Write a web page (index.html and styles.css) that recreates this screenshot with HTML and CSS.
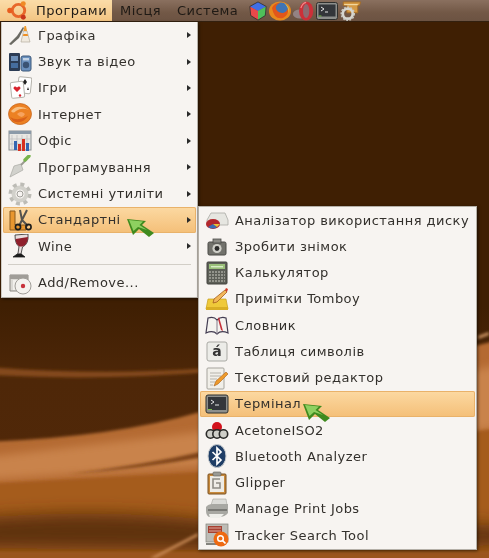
FILE: index.html
```html
<!DOCTYPE html>
<html>
    <head>
        <title>Програми</title>
        <link rel="stylesheet" href="styles.css">
    </head>
    <body>
        <div class="desktop">
            <svg class="wallpaper" viewBox="0 0 489 558" preserveAspectRatio="none">
                <defs>
                    <filter id="soft" filterUnits="userSpaceOnUse" x="-50" y="250" width="600" height="360"><feGaussianBlur stdDeviation="4"/></filter>
                    <filter id="softer" filterUnits="userSpaceOnUse" x="-50" y="250" width="600" height="360"><feGaussianBlur stdDeviation="8"/></filter>
                    <filter id="thin" filterUnits="userSpaceOnUse" x="-50" y="250" width="600" height="360"><feGaussianBlur stdDeviation="1.6"/></filter>
                    <linearGradient id="dusk" x1="0" y1="0" x2="0" y2="1">
                        <stop offset="0.55" stop-color="#3f1f03"/>
                        <stop offset="0.68" stop-color="#4e2708"/>
                        <stop offset="1" stop-color="#54290a"/>
                    </linearGradient>
                </defs>
                <rect width="489" height="558" fill="url(#dusk)"/>
                <path d="M-10 367 Q100 376 210 368 L210 372 Q100 381 -10 375Z" fill="#84491a" filter="url(#thin)"/>
                <path d="M-20 442 Q110 438 200 412 L520 335 L520 600 L-20 600Z" fill="#b46a30" filter="url(#thin)"/>
                <path d="M-20 458 L200 432 L520 360 L520 425 L200 466 L-20 480Z" fill="#c9834b" filter="url(#soft)"/>
                <path d="M-20 484 L200 472 L520 425 L520 600 L-20 600Z" fill="#a55b1d" filter="url(#thin)"/>
                <path d="M68 474 Q140 466 210 450 L210 456 Q140 469 68 474Z" fill="#7e4319" filter="url(#thin)"/>
                <path d="M-20 518 Q100 508 210 520 L520 526 L520 545 L210 550 L-20 548Z" fill="#5f330e" filter="url(#softer)"/>
                <rect x="-20" y="552" width="540" height="20" fill="#9a551b" filter="url(#thin)"/>
                <path d="M150 558 L198 533 L198 536 L156 558Z" fill="#c98a55" filter="url(#thin)"/>
                <path d="M489 332 L478 336 L478 339 L489 335Z" fill="#d39a68" filter="url(#thin)"/>
            </svg>

            <div class="panel">
                <div class="panel-item panel-active">
                    <svg class="logo" viewBox="0 0 24 20" preserveAspectRatio="none">
                        <circle cx="12" cy="10" r="6.5" fill="none" stroke="#e8672a" stroke-width="3"/>
                        <circle cx="3" cy="10" r="2.8" fill="#e85d1e"/>
                        <circle cx="17" cy="2.8" r="2.6" fill="#f08a25"/>
                        <circle cx="17" cy="17.2" r="2.6" fill="#c8351b"/>
                    </svg>
                    <span>Програми</span>
                </div>
                <div class="panel-item"><span>Місця</span></div>
                <div class="panel-item"><span>Система</span></div>
                <div class="launchers">
                    <svg class="launcher cube" viewBox="0 0 22 22">
                        <path d="M11 1 L20 6 L11 11 L2 6Z" fill="#3f6fe8"/>
                        <path d="M2 6 L11 11 L11 21 L3 16Z" fill="#e8494a"/>
                        <path d="M20 6 L11 11 L11 21 L19 16Z" fill="#4fc05a"/>
                        <path d="M11 1 L20 6 L19 16 L11 21 L3 16 L2 6Z" fill="none" stroke="#2a2a2a" stroke-width=".8"/>
                    </svg>
                    <svg class="launcher" viewBox="0 0 22 20">
                        <ellipse cx="11" cy="10" rx="11" ry="9.5" fill="#e8891c"/>
                        <ellipse cx="12" cy="8" rx="7.5" ry="6.5" fill="#3f74b5"/>
                        <path d="M3 7 Q5 2 11 2 Q6 4 7 8 Q9 12 14 12 Q18 11 19 7 Q20 14 14 17 Q5 19 3 7Z" fill="#e2561a"/>
                        <path d="M15 2 Q21 5 20 12 Q19 5 15 2Z" fill="#f6c83a"/>
                    </svg>
                    <svg class="launcher wide" viewBox="0 0 26 20" preserveAspectRatio="none">
                        <ellipse cx="9" cy="13" rx="8" ry="4.5" fill="#9c8d92" opacity=".8"/>
                        <ellipse cx="16" cy="10" rx="8" ry="9.5" fill="#cc2f38"/>
                        <ellipse cx="16" cy="10" rx="3.6" ry="7" fill="#8d6a70"/>
                        <path d="M10 7 Q12 2 16 1.4" fill="none" stroke="#f08a8a" stroke-width="1.4"/>
                    </svg>
                    <svg class="launcher" viewBox="0 0 22 18">
                        <rect x=".5" y=".5" width="21" height="17" rx="2" fill="#8d8f8c" stroke="#2f302e"/>
                        <rect x="2.5" y="2.5" width="17" height="12" fill="#33363a"/>
                        <path d="M5 5 L8 7 L5 9 M9 10 H12" fill="none" stroke="#e6e6e6" stroke-width="1"/>
                        <rect x="2.5" y="13.5" width="3" height="1" fill="#7dc04a"/>
                    </svg>
                    <svg class="launcher wide" viewBox="0 0 24 22">
                        <path d="M4 1 H23 L22 5 H20 V13 H8 V5 H4Z" fill="#d59a45" stroke="#a66c22" stroke-width="1"/>
                        <path d="M5 4 H20" stroke="#f5dda8" stroke-width="1.2"/>
                        <circle cx="9" cy="14" r="5.5" fill="none" stroke="#d6d6cf" stroke-width="3"/>
                        <circle cx="9" cy="14" r="7.2" fill="none" stroke="#c9c9c2" stroke-width="1.6" stroke-dasharray="2 1.6"/>
                    </svg>
                </div>
            </div>

            <div class="menu main-menu">
                <div class="menu-item">
                    <svg class="icon" viewBox="0 0 24 24">
                        <path d="M13 19 L15.5 8 H19 L22 19Z" fill="#f0eadf" stroke="#b5ad9f" stroke-width=".7"/>
                        <path d="M15 13 H20 L19.6 11 H15.4Z" fill="#ee8f24"/>
                        <path d="M15.5 8 L19 8 L18 3 H16.5Z" fill="#f09c2d"/>
                        <path d="M1 21 L9 13 L15 4 L16 5 L11 15 L3 22Z" fill="#6b6a63"/>
                    </svg>
                    <span class="label">Графіка</span><i class="arrow"></i>
                </div>
                <div class="menu-item">
                    <svg class="icon" viewBox="0 0 24 24">
                        <rect x="1" y="3" width="11" height="18" rx="1" fill="#2c3c54"/>
                        <rect x="3" y="6" width="7" height="5" fill="#6d8fb8"/>
                        <rect x="3" y="13" width="7" height="5" fill="#456d9e"/>
                        <rect x="13" y="6" width="10" height="15" rx="2" fill="#6a90bd" stroke="#3d587a"/>
                        <circle cx="18" cy="15" r="3.2" fill="#3a5374"/>
                        <rect x="15" y="8" width="6" height="2.4" fill="#c2d2e4"/>
                    </svg>
                    <span class="label">Звук та відео</span><i class="arrow"></i>
                </div>
                <div class="menu-item">
                    <svg class="icon" viewBox="0 0 24 24">
                        <rect x="10" y="1" width="13" height="16" rx="1.5" fill="#fff" stroke="#b5b2ab" transform="rotate(6 15 10)"/>
                        <rect x="3" y="6" width="13" height="16" rx="1.5" fill="#fff" stroke="#b5b2ab" transform="rotate(-6 8 14)"/>
                        <path d="M9 16 L5.5 12.5 Q5.5 10 7.5 10.5 L9 11.5 L10.5 10.5 Q12.5 10 12.5 12.5Z" fill="#d9232d"/>
                        <path d="M17 3 L19 6 L17 9 L15 6Z M20 11 L21 14 L19 14Z" fill="#222"/>
                        <circle cx="12" cy="19.5" r="1.2" fill="#d9232d"/>
                    </svg>
                    <span class="label">Ігри</span><i class="arrow"></i>
                </div>
                <div class="menu-item">
                    <svg class="icon" viewBox="0 0 24 24">
                        <ellipse cx="12" cy="12" rx="11.5" ry="10.5" fill="#ec8123" stroke="#c3601a" stroke-width=".7"/>
                        <path d="M3 9 Q10 1 21 8 Q14 5 8 9 Q5 12 3 9Z" fill="#f8bf82"/>
                        <path d="M9 12 Q13 8 17 12 Q14 18 9 12Z" fill="#f7a35f"/>
                        <path d="M2 15 Q10 20 20 14 Q14 23 5 19Z" fill="#d9611a"/>
                    </svg>
                    <span class="label">Інтернет</span><i class="arrow"></i>
                </div>
                <div class="menu-item">
                    <svg class="icon" viewBox="0 0 24 24">
                        <rect x="1" y="2" width="22" height="19" fill="#e8e7e3" stroke="#8b9094"/>
                        <rect x="1" y="2" width="22" height="3" fill="#8b9aa8"/>
                        <path d="M4 6 V20 M9 6 V20 M14 6 V20 M19 6 V20 M2 10 H22 M2 15 H22" stroke="#bbb" stroke-width=".7"/>
                        <rect x="6" y="12" width="3" height="9" fill="#3566b0"/>
                        <rect x="10" y="15" width="3" height="7" fill="#d7301f"/>
                        <rect x="14" y="10" width="3" height="12" fill="#d7301f"/>
                        <rect x="18" y="14" width="3" height="8" fill="#3566b0"/>
                    </svg>
                    <span class="label">Офіс</span><i class="arrow"></i>
                </div>
                <div class="menu-item">
                    <svg class="icon" viewBox="0 0 24 24">
                        <path d="M2 22 L6 11 L13 9 L15 15Z" fill="#d2d2cd" stroke="#a9a9a4" stroke-width=".7"/>
                        <path d="M13 10 L19 4" stroke="#9a9a91" stroke-width="2"/>
                        <path d="M17 5 L21 1" stroke="#78b44c" stroke-width="3.4" stroke-linecap="round"/>
                    </svg>
                    <span class="label">Програмування</span><i class="arrow"></i>
                </div>
                <div class="menu-item">
                    <svg class="icon" viewBox="0 0 24 24">
                        <circle cx="12" cy="12" r="6.5" fill="none" stroke="#d2d1cb" stroke-width="4"/>
                        <circle cx="12" cy="12" r="9.8" fill="none" stroke="#bdbcb6" stroke-width="3.4" stroke-dasharray="4 3.7"/>
                        <circle cx="12" cy="12" r="3" fill="none" stroke="#9f9e98"/>
                    </svg>
                    <span class="label">Системні утиліти</span><i class="arrow"></i>
                </div>
                <div class="menu-item active">
                    <svg class="icon" viewBox="0 0 24 24">
                        <path d="M2 3 H7 V17 H18 V22 H2Z" fill="#e8962f" stroke="#8a5a1e"/>
                        <path d="M12 2 L14 12 M19 2 L14 12 L11 18 M14 12 L20 18" stroke="#55534e" stroke-width="2" fill="none"/>
                        <circle cx="10" cy="19" r="2.6" fill="none" stroke="#1d1d1b" stroke-width="1.6"/>
                        <circle cx="20.5" cy="19" r="2.6" fill="none" stroke="#1d1d1b" stroke-width="1.6"/>
                    </svg>
                    <span class="label">Стандартні</span><i class="arrow"></i>
                </div>
                <div class="menu-item">
                    <svg class="icon" viewBox="0 0 24 24">
                        <path d="M7 1 L20 0 Q21 10 14.5 13 L13 20 L17 23 H5 L10 19.5 L11 12.5 Q7 10 7 1Z" fill="#e8dede" stroke="#2a2a2a" stroke-width=".8"/>
                        <path d="M7.5 5 L20 3 Q20 10 14.5 12.5 H11.5 Q8 10.5 7.5 5Z" fill="#8f1f2c"/>
                        <path d="M5 23 L10 19.5 H13 L17 23Z" fill="#1c1c1c"/>
                    </svg>
                    <span class="label">Wine</span><i class="arrow"></i>
                </div>
                <div class="separator"></div>
                <div class="menu-item">
                    <svg class="icon" viewBox="0 0 24 24">
                        <path d="M2 4 H20 V20 H2Z" fill="#dcdad5" stroke="#8b8882"/>
                        <rect x="2" y="4" width="18" height="4" fill="#a09d98"/>
                        <rect x="5" y="9" width="4" height="10" fill="#f2f0ec"/>
                        <circle cx="15" cy="15" r="8" fill="#f4f2ee" stroke="#a09d98"/>
                        <circle cx="15" cy="15" r="2.2" fill="#c7313a"/>
                    </svg>
                    <span class="label">Add/Remove...</span>
                </div>
            </div>

            <div class="menu sub-menu">
                <div class="menu-item">
                    <svg class="icon" viewBox="0 0 24 24">
                        <path d="M6 5 H20 L23 12 V17 H2 V12Z" fill="#e6e6e1" stroke="#a9a9a4" stroke-width=".8"/>
                        <ellipse cx="8" cy="16" rx="7" ry="5" fill="#b3272d"/>
                        <path d="M8 16 L3 19 Q8 22 12 19Z" fill="#3a6db5"/>
                        <path d="M8 16 L12 19 L15 16Z" fill="#e8c33a"/>
                    </svg>
                    <span class="label">Аналізатор використання диску</span>
                </div>
                <div class="menu-item">
                    <svg class="icon" viewBox="0 0 24 24">
                        <rect x="3" y="8" width="18" height="13" rx="1.5" fill="#72726c" stroke="#4a4a46"/>
                        <rect x="8" y="5" width="8" height="4" fill="#8b8b85" stroke="#4a4a46" stroke-width=".8"/>
                        <circle cx="12" cy="14.5" r="4.6" fill="#cfcfc8"/>
                        <circle cx="12" cy="14.5" r="2.4" fill="#2b2b2a"/>
                    </svg>
                    <span class="label">Зробити знімок</span>
                </div>
                <div class="menu-item">
                    <svg class="icon" viewBox="0 0 24 24">
                        <rect x="2" y="1" width="20" height="22" rx="1" fill="#5c5e57" stroke="#42433e"/>
                        <rect x="4" y="3" width="16" height="5" fill="#9ac07a"/>
                        <rect x="6" y="5" width="12" height="1.4" fill="#d8ecc5"/>
                        <path d="M4 11 H20 M4 14 H20 M4 17 H20 M4 20 H20" stroke="#a5a69f" stroke-width="1.6" stroke-dasharray="2 1"/>
                    </svg>
                    <span class="label">Калькулятор</span>
                </div>
                <div class="menu-item">
                    <svg class="icon" viewBox="0 0 24 24">
                        <path d="M3 12 H21 L23 22 H1Z" fill="#efc93a" stroke="#c59f1c" stroke-width=".7"/>
                        <path d="M1 20 H23 V23 H1Z" fill="#d9ae24"/>
                        <path d="M8 16 L9 12 L20 3 L22 5 L12 15Z" fill="#f2b75a" stroke="#a55d1c" stroke-width=".8"/>
                        <path d="M20 3 L22 5 L23 2 L21 1Z" fill="#d23a2a"/>
                    </svg>
                    <span class="label">Примітки Tomboy</span>
                </div>
                <div class="menu-item">
                    <svg class="icon" viewBox="0 0 24 24">
                        <path d="M1 20 L3 5 Q9 3 12 7 Q16 3 21 5 L23 20 Q16 17 12 21 Q8 17 1 20Z" fill="#f5f3ef" stroke="#433d52" stroke-width="1.2"/>
                        <path d="M12 7 V21" stroke="#857f8c"/>
                        <path d="M14 4 L18 18 L16 17 L13 6Z" fill="#c4303a"/>
                    </svg>
                    <span class="label">Словник</span>
                </div>
                <div class="menu-item">
                    <svg class="icon" viewBox="0 0 24 24">
                        <rect x="2" y="3" width="20" height="19" rx="2" fill="#ececE8" stroke="#a9a9a4"/>
                        <text class="glyph" x="12" y="17" text-anchor="middle">á</text>
                    </svg>
                    <span class="label">Таблиця символів</span>
                </div>
                <div class="menu-item">
                    <svg class="icon" viewBox="0 0 24 24">
                        <rect x="2" y="2" width="17" height="21" rx="1" fill="#f1efe9" stroke="#a5a39c"/>
                        <path d="M5 7 H16 M5 10 H16 M5 13 H12 M5 16 H10 M5 19 H8" stroke="#b5b3ab"/>
                        <path d="M9 20 L11 15 L21 6 L23 8 L13 18Z" fill="#ee9a2a" stroke="#a85f1b" stroke-width=".6"/>
                    </svg>
                    <span class="label">Текстовий редактор</span>
                </div>
                <div class="menu-item active">
                    <svg class="icon" viewBox="0 0 24 24">
                        <rect x="1" y="3" width="22" height="18" rx="2" fill="#8d8f8c" stroke="#2f302e"/>
                        <rect x="3" y="5" width="18" height="13" fill="#33363a"/>
                        <path d="M6 8 L9 10 L6 12 M10 13 H14" fill="none" stroke="#e6e6e6"/>
                        <rect x="3" y="17" width="4" height="1" fill="#7dc04a"/>
                    </svg>
                    <span class="label">Термінал</span>
                </div>
                <div class="menu-item">
                    <svg class="icon" viewBox="0 0 24 24">
                        <circle cx="12" cy="9" r="5" fill="#d3121c"/>
                        <ellipse cx="12" cy="14" rx="9" ry="2.5" fill="#33332f"/>
                        <circle cx="5.5" cy="16" r="4.2" fill="#cfcfc9" stroke="#2a2a28" stroke-width="1.6"/>
                        <circle cx="12" cy="16" r="4.2" fill="#cfcfc9" stroke="#2a2a28" stroke-width="1.6"/>
                        <circle cx="18.5" cy="16" r="4.2" fill="#cfcfc9" stroke="#2a2a28" stroke-width="1.6"/>
                    </svg>
                    <span class="label">AcetoneISO2</span>
                </div>
                <div class="menu-item">
                    <svg class="icon" viewBox="0 0 24 24">
                        <ellipse cx="12" cy="12" rx="9" ry="11.5" fill="#1f3e66" stroke="#c5c9cc"/>
                        <path d="M7.5 8 L16 16 L12 20 V4 L16 8 L7.5 16" fill="none" stroke="#fff" stroke-width="1.7"/>
                    </svg>
                    <span class="label">Bluetooth Analyzer</span>
                </div>
                <div class="menu-item">
                    <svg class="icon" viewBox="0 0 24 24">
                        <rect x="3" y="3" width="18" height="20" rx="1" fill="#c88a3c" stroke="#7a5120"/>
                        <rect x="5" y="5" width="14" height="16" fill="#eeece6"/>
                        <rect x="8" y="1" width="8" height="4" rx="1" fill="#9a9a94" stroke="#5e5e59" stroke-width=".6"/>
                        <path d="M15 8 H8 V17 H15 V12 H11" fill="none" stroke="#8e8c85" stroke-width="1.6"/>
                    </svg>
                    <span class="label">Glipper</span>
                </div>
                <div class="menu-item">
                    <svg class="icon" viewBox="0 0 24 24">
                        <path d="M8 2 H21 L22 8 H6Z" fill="#dcdcd8" stroke="#a5a5a0" stroke-width=".6"/>
                        <path d="M1 10 Q3 7 8 7 H23 V16 Q20 20 14 20 H4 Q1 18 1 14Z" fill="#a8a8a3"/>
                        <path d="M3 13 H22" stroke="#6d6d69" stroke-width="1.6"/>
                        <path d="M4 17 H19 L15 21 H5Z" fill="#eeeeea"/>
                    </svg>
                    <span class="label">Manage Print Jobs</span>
                </div>
                <div class="menu-item">
                    <svg class="icon" viewBox="0 0 24 24">
                        <rect x="1" y="1" width="22" height="18" fill="#bdbcb6" stroke="#81807a" stroke-width=".7"/>
                        <rect x="3" y="3" width="14" height="7" fill="#a64031"/>
                        <path d="M4 5 H16 M4 8 H16" stroke="#dca79e"/>
                        <rect x="1" y="20" width="13" height="2" fill="#84837d"/>
                        <circle cx="16" cy="16" r="7.5" fill="#ee6a12"/>
                        <circle cx="15.5" cy="15.5" r="2.8" fill="none" stroke="#fff" stroke-width="1.5"/>
                        <path d="M17.5 17.5 L20.5 20.5" stroke="#fff" stroke-width="1.7"/>
                    </svg>
                    <span class="label">Tracker Search Tool</span>
                </div>
            </div>

            <svg class="pointer pointer-left" viewBox="0 0 28 20">
                <path d="M0 1 L19 3 L15 7 L27 15 L22 19 L12 11 L6 17Z" fill="#3f8a1e"/>
                <path d="M2 2 L16 3.6 L12.5 7 L20 12 L11 9 L6.5 13Z" fill="#8ed060"/>
            </svg>
            <svg class="pointer pointer-right" viewBox="0 0 28 20">
                <path d="M0 1 L19 3 L15 7 L27 15 L22 19 L12 11 L6 17Z" fill="#3f8a1e"/>
                <path d="M2 2 L16 3.6 L12.5 7 L20 12 L11 9 L6.5 13Z" fill="#8ed060"/>
            </svg>
        </div>
    </body>
</html>
```

FILE: styles.css
```css
html,
body {
    margin: 0;
    background-color: #3f1f03;
}

.desktop {
    position: relative;
    width: 489px;
    height: 558px;
    overflow: hidden;
    font-family: "DejaVu Sans", sans-serif;
    font-size: 13px;
    letter-spacing: 0.47px;
    color: #33302c;
    filter: blur(0.45px);
}

.wallpaper {
    position: absolute;
    top: 0;
    left: 0;
    width: 489px;
    height: 558px;
}

.panel {
    position: relative;
    height: 22px;
    display: flex;
    align-items: stretch;
    background: linear-gradient(#8a705f, #725846 60%, #6c5342);
    border-bottom: 1px solid #33200f;
    box-sizing: border-box;
    color: #1f1a15;
}

.panel-item {
    display: flex;
    align-items: center;
    gap: 6px;
    padding: 0 8px;
}

.panel-active {
    width: 112px;
    box-sizing: border-box;
    background: linear-gradient(#fbdca8, #f3c583);
    padding-left: 7px;
}

.logo {
    width: 23px;
    height: 19px;
    flex-shrink: 0;
}

.launchers {
    display: flex;
    align-items: center;
    gap: 1px;
    padding-left: 2px;
}

.launcher {
    width: 22px;
    height: 20px;
}

.launcher.cube {
    width: 20px;
}

.launcher.wide {
    width: 23px;
}

.menu {
    position: absolute;
    background-color: #f7f4f1;
    box-sizing: border-box;
    box-shadow: 1px 1px 3px rgba(0, 0, 0, 0.55);
    border: 1px solid #b5b0a8;
}

.main-menu {
    top: 22px;
    left: 1px;
    width: 197px;
    height: 276px;
    border-top: 0;
    border-left-color: #cfcbc4;
}

.sub-menu {
    top: 206px;
    left: 198px;
    width: 279px;
    height: 344px;
}

.menu-item {
    position: relative;
    display: flex;
    align-items: center;
    height: 26.25px;
    box-sizing: border-box;
    padding: 0 6px;
    gap: 6px;
}

.main-menu .menu-item {
    height: 26.4px;
}

.active {
    background: linear-gradient(#fcd9a2, #f4bf78);
    box-shadow: inset 0 0 0 1px #e9b26a;
    border-radius: 2px;
    margin: 0 1px;
    padding: 0 5px;
}

.icon {
    width: 24px;
    height: 24px;
    flex-shrink: 0;
}

.label {
    flex: 1;
    white-space: nowrap;
}

.arrow {
    width: 0;
    height: 0;
    border-left: 4px solid #2a2a2a;
    border-top: 3.5px solid transparent;
    border-bottom: 3.5px solid transparent;
}

.separator {
    height: 1px;
    margin: 4px 6px 5px;
    background-color: #d2cec7;
}

.glyph {
    font-size: 14px;
    font-weight: bold;
    fill: #333;
    letter-spacing: 0;
}

.pointer {
    position: absolute;
    width: 28px;
    height: 20px;
}

.pointer-left {
    top: 218px;
    left: 127px;
}

.pointer-right {
    top: 403px;
    left: 303px;
}
```
